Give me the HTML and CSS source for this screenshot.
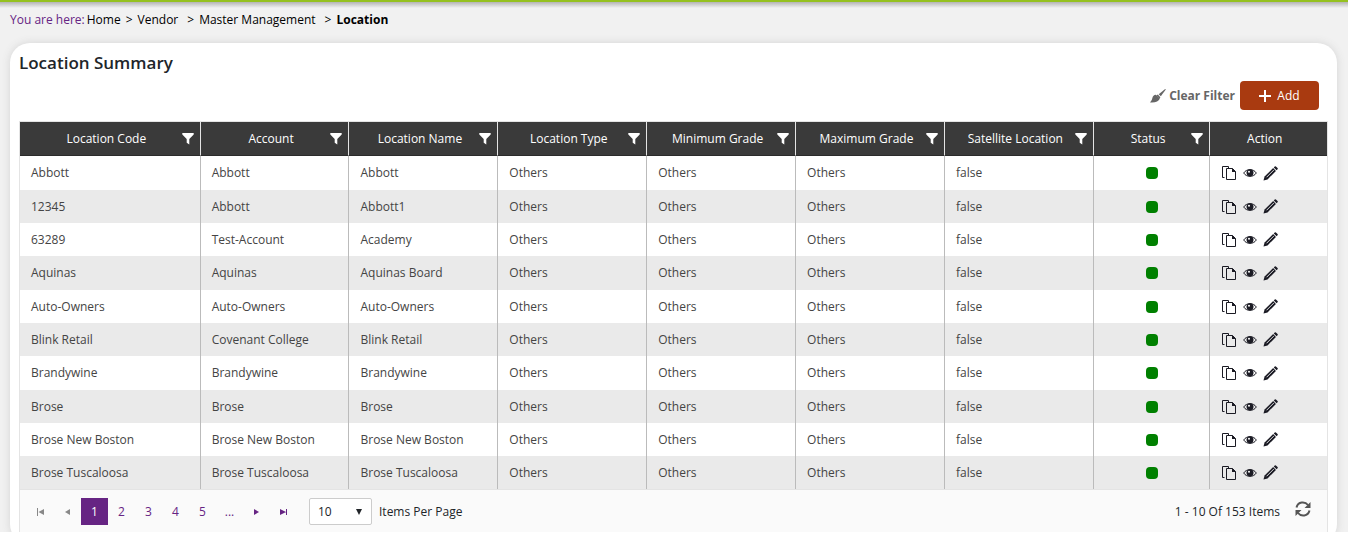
FILE: index.html
```html
<!DOCTYPE html>
<html lang="en">
<head>
  <meta charset="UTF-8" />
  <meta name="viewport" content="width=device-width, initial-scale=1.0" />
  <title>Location Summary</title>
  <link rel="stylesheet" href="styles.css">
</head>
<body>
  <svg class="sprite" aria-hidden="true">
    <symbol id="i-filter" viewBox="0 0 12 12"><path d="M.3 0h11.400v1.600L7.300 6v5.500L4.700 9.800V6L.3 1.600z"/></symbol>
    <symbol id="i-copy" viewBox="0 0 16 16"><path fill="none" stroke="currentColor" d="M3.500 12.500h-2v-11h6V3M5.500 3.500h6l3 3v8h-9z"/><path d="M11 3v4h4z"/></symbol>
    <symbol id="i-eye" viewBox="0 0 14 10"><path fill="none" stroke="currentColor" d="M.7 5C3.500.500 10.500.500 13.300 5 10.500 9.500 3.500 9.500.7 5z"/><circle cx="7" cy="4.700" r="3.500"/><circle cx="6" cy="3.800" r="1" fill="#fff"/></symbol>
    <symbol id="i-pencil" viewBox="0 0 16 16"><path d="M.5 15.500l1.200-4.300L10.800 2.200l3 3L4.800 14.300z"/><path d="M11.500 1.500l1-1q.6-.6 1.300 0l1.700 1.700q.6.600 0 1.300l-1 1z"/><path stroke="#fff" stroke-width=".9" d="M3.800 12L11.500 4.300"/></symbol>
    <symbol id="i-brush" viewBox="0 0 16 14"><path d="M15.800.600L10.800 7.200 8.700 5.200 15.200 0z"/><path d="M7.800 5.600l2.600 2.600-1 1.500L6.300 6.600z"/><path d="M5.800 5.800l4 4Q8 14 0 13.400 2.100 11.500 2.300 9.300 3 5.800 5.800 5.800z"/></symbol>
    <symbol id="i-plus" viewBox="0 0 12 12"><path d="M5 0h2v5h5v2H7v5H5V7H0V5h5z"/></symbol>
    <symbol id="i-first" viewBox="0 0 8 8"><path d="M0 0h1v8H0zM7 1v6L1.500 4z"/></symbol>
    <symbol id="i-prev" viewBox="0 0 8 8"><path d="M6 1v6L1 4z"/></symbol>
    <symbol id="i-next" viewBox="0 0 8 8"><path d="M1 1v6l5-3z"/></symbol>
    <symbol id="i-last" viewBox="0 0 8 8"><path d="M6 1h1v6H6zM0 1v6l6-3z"/></symbol>
    <symbol id="i-down" viewBox="0 0 8 8"><path d="M1 1h6L4 7z"/></symbol>
    <symbol id="i-refresh" viewBox="0 0 16 16"><path fill="none" stroke="currentColor" stroke-width="2" d="M1.500 6.500C3 .5 10 .2 13 4M14.500 9.500C13 15.500 6 15.800 3 12"/><path d="M15.500 1v6h-6zM.5 15V9h6z"/></symbol>
  </svg>

  <div class="page">
    <nav class="breadcrumb">
      <span class="here">You are here:</span>
      <a href="#">Home</a><span>&gt;</span>
      <a href="#">Vendor</a><span class="sep">&gt;</span>
      <a href="#">Master Management</a><span class="sep">&gt;</span>
      <b>Location</b>
    </nav>

    <main class="card">
      <h1>Location Summary</h1>
      <div class="toolbar">
        <button class="clear"><svg><use href="#i-brush"/></svg>Clear Filter</button>
        <button class="add"><svg><use href="#i-plus"/></svg>Add</button>
      </div>

      <div class="grid">
        <table>
          <colgroup>
            <col class="c-code"><col class="c-std"><col class="c-std"><col class="c-std"><col class="c-std">
            <col class="c-std"><col class="c-std"><col class="c-small"><col class="c-small">
          </colgroup>
          <thead><tr id="head"></tr></thead>
          <tbody id="rows"></tbody>
        </table>

        <div class="pager">
          <button class="page-btn off" aria-label="First page"><svg><use href="#i-first"/></svg></button>
          <button class="page-btn off" aria-label="Previous page"><svg><use href="#i-prev"/></svg></button>
          <button class="page-btn current">1</button>
          <button class="page-btn">2</button>
          <button class="page-btn">3</button>
          <button class="page-btn">4</button>
          <button class="page-btn">5</button>
          <button class="page-btn">...</button>
          <button class="page-btn" aria-label="Next page"><svg><use href="#i-next"/></svg></button>
          <button class="page-btn" aria-label="Last page"><svg><use href="#i-last"/></svg></button>
          <span class="size-box">
            <select id="size"><option>10</option><option>20</option><option>50</option></select>
            <svg><use href="#i-down"/></svg>
          </span>
          <label for="size">Items Per Page</label>
          <span class="count">1 - 10 Of 153 Items</span>
          <button class="refresh" aria-label="Refresh"><svg><use href="#i-refresh"/></svg></button>
        </div>
      </div>
    </main>
  </div>

  <script>
    const columns = ["Location Code", "Account", "Location Name", "Location Type",
      "Minimum Grade", "Maximum Grade", "Satellite Location", "Status"];
    const locations = [
      ["Abbott", "Abbott", "Abbott"],
      ["12345", "Abbott", "Abbott1"],
      ["63289", "Test-Account", "Academy"],
      ["Aquinas", "Aquinas", "Aquinas Board"],
      ["Auto-Owners", "Auto-Owners", "Auto-Owners"],
      ["Blink Retail", "Covenant College", "Blink Retail"],
      ["Brandywine", "Brandywine", "Brandywine"],
      ["Brose", "Brose", "Brose"],
      ["Brose New Boston", "Brose New Boston", "Brose New Boston"],
      ["Brose Tuscaloosa", "Brose Tuscaloosa", "Brose Tuscaloosa"]
    ];
    const icon = name => `<svg class="${name}"><use href="#i-${name}"/></svg>`;

    document.getElementById("head").innerHTML = columns.map(c =>
      `<th><div class="th"><span>${c}</span><button aria-label="Filter ${c}">${icon("filter")}</button></div></th>`
    ).join("") + "<th>Action</th>";

    document.getElementById("rows").innerHTML = locations.map(l => {
      const cells = [...l, "Others", "Others", "Others", "false"];
      return "<tr>" + cells.map(c => `<td>${c}</td>`).join("") +
        `<td><span class="dot"></span></td>
        <td><div class="actions">
          <button aria-label="Copy">${icon("copy")}</button>
          <button aria-label="View">${icon("eye")}</button>
          <button aria-label="Edit">${icon("pencil")}</button>
        </div></td></tr>`;
    }).join("");
  </script>
</body>
</html>
```

FILE: styles.css
```css
* { box-sizing: border-box; }
body { margin: 0; background: #fff; color: #212529;
  font: 12px/18px "Open Sans", "Noto Sans", sans-serif; }
button { border: 0; padding: 0; background: none; color: inherit; font: inherit; cursor: pointer; }
svg { display: block; fill: currentColor; }
.sprite { position: absolute; width: 0; height: 0; }

.page { height: calc(100vh - 5px); overflow: hidden; border-top: 2px solid #95c11f;
  background: linear-gradient(#b4b4b4, #f1f1f1 6px); }

.breadcrumb { display: flex; padding: 9px 10px 0; color: #000; }
.breadcrumb a { color: #000; text-decoration: none; margin-right: 5px; }
.breadcrumb span { margin-right: 5px; }
.breadcrumb .here { color: #662483; margin-right: 2px; }
.breadcrumb .sep { margin-left: 4px; }

.card { margin: 14px 11px 0 10px; padding: 8px 9px 10px 9px; background: #fff;
  border-radius: 20px; box-shadow: 0 0 8px #d4d4d4; }
h1 { margin: 0; font-size: 17px; line-height: 24px; font-weight: 600; }

.toolbar { display: flex; justify-content: flex-end; align-items: center; gap: 5px;
  padding: 6px 9px 11px; }
.toolbar button { display: flex; align-items: center; }
.clear { gap: 3px; color: #666; font-weight: 700; }
.clear svg { width: 16px; height: 14px; }
.add { gap: 6px; justify-content: center; width: 79px; height: 29px; border-radius: 4px;
  background: #a93a10; color: #fff; }
.add svg { width: 12px; height: 12px; }

.grid { border: 1px solid #e4e4e4; }
table { width: 100%; border-collapse: separate; border-spacing: 0; table-layout: fixed; }
.c-code { width: 13.82%; }
.c-std { width: 11.39%; }
.c-small { width: 8.92%; }
th { height: 34px; padding: 0; background: #3a3a3a; color: #fff; font-weight: 400;
  border-right: 1px solid #e4e4e4; border-bottom: 1px solid #2b2b2b; }
th:last-child, td:last-child { border-right: 0; }
th:last-child { padding-right: 8px; }
.th { display: flex; align-items: center; padding-right: 6px; }
.th span { flex: 1; padding-left: 11px; white-space: nowrap; }
.filter { width: 12px; height: 12px; }
td { height: 33px; padding: 0 11px; color: #444; border-right: 1px solid #bbb; white-space: nowrap; }
tr:nth-child(3n + 1) td { height: 34px; }
tr:last-child td { height: 33px; }
tbody tr:nth-child(even) { background: #eaeaea; }
.dot { display: block; width: 12px; height: 12px; margin: 0 auto; border-radius: 4px; background: #008000; }
.actions { display: flex; align-items: center; gap: 6px; color: #1b1b24; }
.copy { width: 16px; height: 16px; }
.eye { width: 14px; height: 10px; }
.pencil { width: 15px; height: 15px; }

.pager { display: flex; align-items: center; height: 44px; padding: 0 16px 0 7px;
  background: #fafafa; border-top: 1px solid #e4e4e4; }
.page-btn { display: grid; place-items: center; width: 27px; height: 27px; color: #662483; }
.page-btn svg { width: 8px; height: 8px; }
.off { color: #888; }
.current { background: #662483; color: #fff; }
.size-box { position: relative; margin: 0 7px 0 12px; }
.size-box select { display: block; appearance: none; width: 63px; height: 27px; padding: 0 8px;
  border: 1px solid #ccc; border-radius: 2px; background: #fff; color: inherit; font: inherit; }
.size-box svg { position: absolute; right: 9px; top: 10px; width: 8px; height: 8px; pointer-events: none; }
.count { margin-left: auto; }
.refresh { margin-left: 15px; padding-bottom: 5px; color: #555; }
.refresh svg { width: 16px; height: 16px; }
```
